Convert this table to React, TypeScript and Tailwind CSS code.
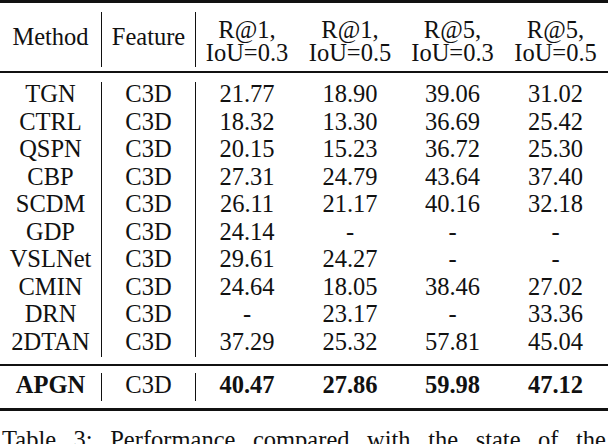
const widths = ["w-[102px]", "w-[94px]", "w-[102px]", "w-[104px]", "w-[101px]", "w-[105px]"];

const rows = [
  ["TGN", "C3D", "21.77", "18.90", "39.06", "31.02"],
  ["CTRL", "C3D", "18.32", "13.30", "36.69", "25.42"],
  ["QSPN", "C3D", "20.15", "15.23", "36.72", "25.30"],
  ["CBP", "C3D", "27.31", "24.79", "43.64", "37.40"],
  ["SCDM", "C3D", "26.11", "21.17", "40.16", "32.18"],
  ["GDP", "C3D", "24.14", "-", "-", "-"],
  ["VSLNet", "C3D", "29.61", "24.27", "-", "-"],
  ["CMIN", "C3D", "24.64", "18.05", "38.46", "27.02"],
  ["DRN", "C3D", "-", "23.17", "-", "33.36"],
  ["2DTAN", "C3D", "37.29", "25.32", "57.81", "45.04"],
];

const ours = ["APGN", "C3D", "40.47", "27.86", "59.98", "47.12"];

const heads = [
  ["R@1,", "IoU=0.3"],
  ["R@1,", "IoU=0.5"],
  ["R@5,", "IoU=0.3"],
  ["R@5,", "IoU=0.5"],
];

function Row({ cells, bold }: { cells: string[]; bold?: boolean }) {
  return (
    <div className="flex h-[27.5px] leading-[23.5px]">
      {cells.map((c, i) => (
        <div
          key={i}
          className={`${widths[i]} text-center ${i < 2 ? "border-r border-[#111]" : ""} ${
            bold && i !== 1 ? "font-bold" : ""
          }`}
        >
          {c}
        </div>
      ))}
    </div>
  );
}

export default function App() {
  return (
    <div className="font-serif">
      <div className="w-[608px] h-[444px] overflow-hidden bg-white text-[#111] text-[24.5px] font-[family-name:Liberation_Serif]">
        <div className="h-[3px] bg-[#111]" />
        <div className="h-[9px]" />
        <div className="flex h-[55px]">
          <div className={`${widths[0]} border-r border-[#111] flex items-center justify-center leading-[27.5px] pb-[5px]`}>
            Method
          </div>
          <div className={`${widths[1]} border-r border-[#111] flex items-center justify-center leading-[27.5px] pb-[5px]`}>
            Feature
          </div>
          {heads.map((h, i) => (
            <div
              key={i}
              className={`${widths[i + 2]} flex flex-col items-center justify-center leading-[23px] pt-[3px]`}
            >
              <span>{h[0]}</span>
              <span>{h[1]}</span>
            </div>
          ))}
        </div>
        <div className="h-[4px]" />
        <div className="h-[2px] bg-[#111]" />
        <div className="h-[9px]" />
        {rows.map((r) => (
          <Row key={r[0]} cells={r} />
        ))}
        <div className="h-[7px]" />
        <div className="h-[2px] bg-[#111]" />
        <div className="h-[7px]" />
        <Row cells={ours} bold />
        <div className="h-[7px]" />
        <div className="h-[3px] bg-[#111]" />
        <div className="mt-[15px] px-[2px] leading-[27.5px] whitespace-nowrap [text-align-last:justify] text-justify">
          Table 3: Performance compared with the state of the
        </div>
      </div>
    </div>
  );
}
